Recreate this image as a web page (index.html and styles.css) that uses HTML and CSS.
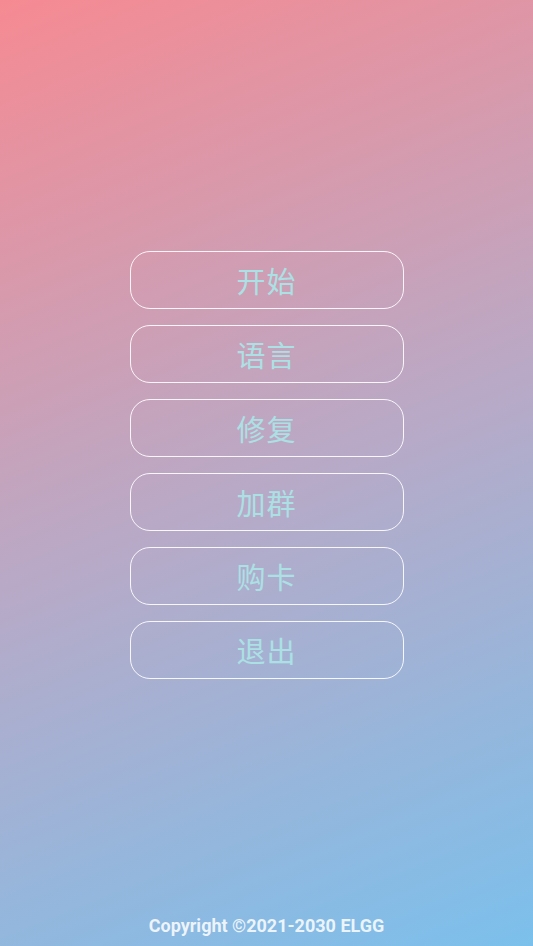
FILE: index.html
```html
<!DOCTYPE html>
<html lang="zh">
<head>
<meta charset="utf-8">
<title>Menu</title>
<link rel="stylesheet" href="styles.css">
</head>
<body>
<div class="page">
  <nav class="menu">
    <button class="menu-btn">开始</button>
    <button class="menu-btn">语言</button>
    <button class="menu-btn">修复</button>
    <button class="menu-btn">加群</button>
    <button class="menu-btn">购卡</button>
    <button class="menu-btn">退出</button>
  </nav>
  <footer class="footer">Copyright ©2021-2030 ELGG</footer>
</div>
</body>
</html>
```
FILE: styles.css
```css
html, body {
  margin: 0;
  padding: 0;
  height: 100%;
}
body {
  background: linear-gradient(158deg, #f68a92 0%, #b9a9c6 50%, #7bc0ec 100%);
  font-family: Roboto, "Noto Sans CJK SC", sans-serif;
}
.page {
  height: 100%;
  display: flex;
  flex-direction: column;
  align-items: center;
}
.menu {
  flex: 1;
  display: flex;
  flex-direction: column;
  gap: 16px;
  padding-top: 251px;
}
.menu-btn {
  width: 274px;
  height: 58px;
  box-sizing: border-box;
  border: 1px solid rgba(255, 255, 255, 0.9);
  border-radius: 20px;
  background: transparent;
  color: #abe1e4;
  font-family: "Noto Sans CJK SC", sans-serif;
  font-size: 29px;
  font-weight: 400;
  letter-spacing: 1px;
  padding: 0;
  line-height: 1;
}
.footer {
  color: rgba(255, 255, 255, 0.85);
  font-family: Roboto, sans-serif;
  font-weight: 700;
  font-size: 18px;
  padding-bottom: 9px;
  line-height: 22px;
}
```
